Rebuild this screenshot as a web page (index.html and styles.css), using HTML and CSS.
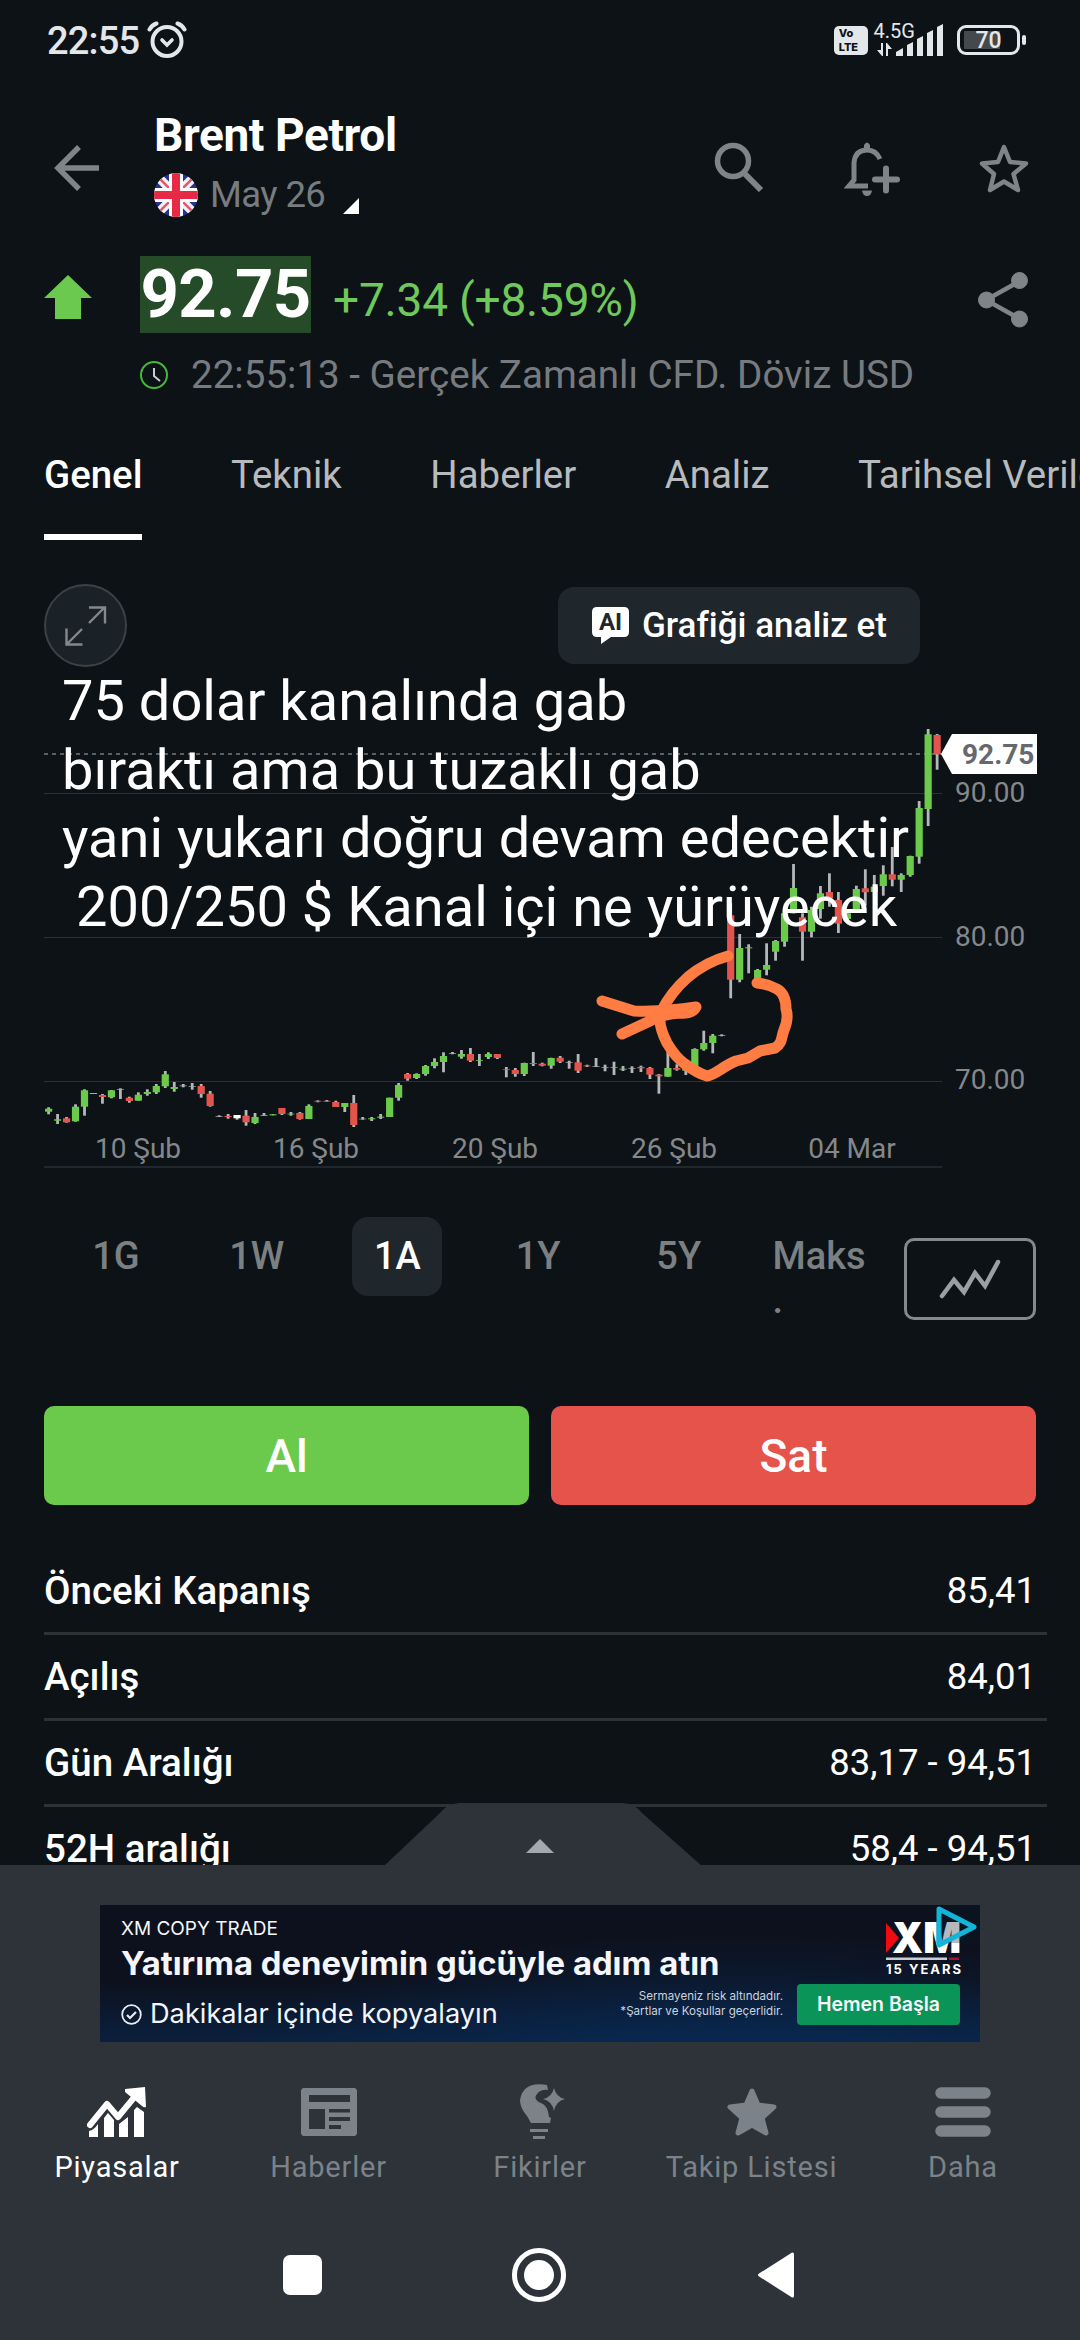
FILE: index.html
```html
<!DOCTYPE html>
<html lang="tr">
<head>
<meta charset="utf-8">
<title>Brent Petrol</title>
<link rel="stylesheet" href="styles.css">
</head>
<body>
<div class="screen">
  <header class="status">
    <span class="status-time">22:55</span>
    <svg class="alarm" width="40" height="38" viewBox="0 0 40 38" fill="none" stroke="#e4e7e9" stroke-linecap="round">
      <circle cx="20" cy="20.500" r="14.500" stroke-width="4"/><path d="M15 19l5 5 5-5" stroke-width="3.600"/><path d="M2.500 8.500Q5 4 9.500 2.500M37.500 8.500Q35 4 30.500 2.500" stroke-width="4"/>
    </svg>
    <span class="volte"><span>Vo</span><span>LTE</span></span>
    <div class="cell">
      <span class="cell-type">4.5G</span>
      <svg width="72" height="34" viewBox="0 0 72 34" fill="#e4e7e9">
        <path d="M9 21h-2v7H3l5 6h1zM12 34h2v-7h4l-5-6h-1zM22 34v-4l7-4v8zM33 34V23l6-3v14zM43 34V17l6-3v20zM53 34V11l6-3v26zM63 34V5l6-3v32z"/>
      </svg>
    </div>
    <div class="battery"><span>70</span></div>
    <i class="battery-nub"></i>
  </header>

  <section class="head">
    <svg class="back" width="46" height="46" viewBox="0 0 46 46" fill="none" stroke="#7f8488" stroke-width="5.500"><path d="M45 23H5M25 2L4 23l21 21"/></svg>
    <div class="title">
      <h1>Brent Petrol</h1>
      <div class="contract">
        <svg width="44" height="44" viewBox="0 0 44 44">
          <defs><clipPath id="disc"><circle cx="22" cy="22" r="22"/></clipPath></defs>
          <g clip-path="url(#disc)"><path fill="#24348f" d="M0 0h44v44H0z"/><path d="M0 0l44 44M44 0L0 44" stroke="#f4f2f7" stroke-width="9"/><path d="M0 0l44 44M44 0L0 44" stroke="#df5a6c" stroke-width="2.500"/><path d="M22 0v44M0 22h44" stroke="#fff" stroke-width="14"/><path d="M22 0v44M0 22h44" stroke="#e62a45" stroke-width="8"/></g>
        </svg>
        <span>May 26</span>
        <svg class="corner" width="16" height="16" viewBox="0 0 16 16"><path fill="#fff" d="M16 0v16H0z"/></svg>
      </div>
    </div>
    <svg class="i-search" width="50" height="50" viewBox="0 0 50 50" fill="none" stroke="#7f8488"><circle cx="19" cy="19" r="15.500" stroke-width="5.500"/><path d="M31 32L47 48" stroke-width="6"/></svg>
    <svg class="i-bell" width="56" height="56" viewBox="0 0 56 56" fill="none" stroke="#7f8488"><path d="M24 47H5l5-6V24q1-13 13-13 9 0 13 9" stroke-width="5" transform="translate(0 -2)"/><path d="M20 9V4q3-5 6 0v5z" fill="#7f8488" stroke="none"/><path d="M18 49.500h10q-1 5.500-5 5.500t-5-5.500z" fill="#7f8488" stroke="none"/><path d="M31 38.500h22M42 27.500v22" stroke-width="6" stroke-linecap="round"/></svg>
    <svg class="i-star" width="52" height="52" viewBox="0 0 52 52" fill="none" stroke="#7f8488" stroke-width="4.500" stroke-linejoin="round"><path d="M26 5l6 15 16 1.500-12.500 10.500 4.500 16-14-8.500L12 48l4-16L4 21.500 20 20z"/></svg>
  </section>

  <section class="quote">
    <svg class="up" width="48" height="44" viewBox="0 0 48 44"><path fill="#6bc94f" d="M24 0l24 23H37v21H11V23H0z"/></svg>
    <div class="quote-main">
      <div class="quote-line"><strong>92.75</strong><span>+7.34 (+8.59%)</span></div>
      <div class="quote-meta">
        <svg width="28" height="28" viewBox="0 0 28 28" fill="none"><circle cx="14" cy="14" r="13" stroke="#45b83c" stroke-width="2"/><path d="M14 7v8l6 5" stroke="#c9cdd0" stroke-width="2"/></svg>
        <span>22:55:13 - Gerçek Zamanlı CFD. Döviz USD</span>
      </div>
    </div>
    <svg class="share" width="50" height="56" viewBox="0 0 50 56" fill="#7f8488" stroke="#7f8488"><path d="M42 9L8 28l34 19" fill="none" stroke-width="4.500"/><circle cx="41.500" cy="8.500" r="8"/><circle cx="8.500" cy="28" r="8"/><circle cx="41.500" cy="47" r="8"/></svg>
  </section>

  <nav class="tabs"><a class="on">Genel</a><a>Teknik</a><a>Haberler</a><a>Analiz</a><a>Tarihsel Veriler</a></nav>

  <section class="chart-area">
    <div class="chart-tools">
      <span class="expand"><svg width="42" height="40" viewBox="0 0 42 40" fill="none" stroke="#84888b" stroke-width="2.400"><path d="M24 17L39 2M24 1.500h16v16M17 23L2 38M1.500 22.500v16h16"/></svg></span>
      <span class="analyse">
        <svg width="37" height="38" viewBox="0 0 37 38"><path fill="#fff" d="M5 0h27q5 0 5 5v20q0 5-5 5H19l-10 7v-7H5q-5 0-5-5V5q0-5 5-5z"/><text x="18.500" y="23" class="ai">AI</text></svg>
        <span>Grafiği analiz et</span>
      </span>
    </div>
    <svg class="chart" width="1080" height="500" viewBox="0 680 1080 500">
      <path d="M44 793.500H942M44 937.500H942M44 1081.500H942" stroke="#283238" stroke-width="1.200"/>
      <path d="M44 1167H942" stroke="#20282d" stroke-width="2"/>
      <path d="M44 754H942" stroke="#74797c" stroke-width="1.500" stroke-dasharray="4 4"/>
      <g id="candles"></g>
      <path d="M941 754l11-20h85v40h-85z" fill="#fff"/>
      <text x="962" y="763.500" class="last">92.75</text>
      <g class="axis"><text x="955" y="802">90.00</text><text x="955" y="946">80.00</text><text x="955" y="1089">70.00</text></g>
      <g class="axis mid"><text x="138" y="1158">10 Şub</text><text x="316" y="1158">16 Şub</text><text x="495" y="1158">20 Şub</text><text x="674" y="1158">26 Şub</text><text x="852" y="1158">04 Mar</text></g>
      <g fill="none" stroke="#ff7c43" stroke-width="11" stroke-linecap="round" stroke-linejoin="round">
        <path d="M728 956Q706 962 688 977C670 993 664 1006 661 1012Q657 1023 667 1043Q676 1058 685 1064Q697 1073 707 1076C717 1074 723 1066 736 1061L748 1058 760 1051 775 1048C783 1043 781 1037 784 1030Q789 1018 786 1009Q786 994 777 989Q768 984 757 983"/>
        <path d="M602 1001L634 1011Q665 1012 696 1007Q692 1014 681 1013Q662 1014 650 1021L622 1034"/>
      </g>
    </svg>
    <div class="note"><p>75 dolar kanalında gab</p><p>bıraktı ama bu tuzaklı gab</p><p>yani yukarı doğru devam edecektir</p><p class="lead">200/250 $ Kanal içi ne yürüyecek</p></div>
  </section>

  <section class="ranges">
    <div class="range-list"><span>1G</span><span>1W</span><span class="on">1A</span><span>1Y</span><span>5Y</span><span class="max">Maks<br>.</span></div>
    <span class="type"><svg width="62" height="40" viewBox="0 0 62 40" fill="none" stroke="#9b9fa1" stroke-width="4.500" stroke-linecap="round"><path d="M3 37L15 21 25 33 36 14 46 27 59 3"/></svg></span>
  </section>

  <section class="trade"><button class="buy">Al</button><button class="sell">Sat</button></section>

  <section class="stats">
    <div><b>Önceki Kapanış</b><span>85,41</span></div>
    <div><b>Açılış</b><span>84,01</span></div>
    <div><b>Gün Aralığı</b><span>83,17 - 94,51</span></div>
    <div><b>52H aralığı</b><span>58,4 - 94,51</span></div>
  </section>

  <footer class="bottom">
    <svg class="handle" width="318" height="63" viewBox="0 0 318 63"><path fill="#2d3339" d="M0 63L56 10Q64 0 76 0H238Q250 0 258 10L318 63z"/><path fill="#a5a9ae" d="M142 50l14-14 14 14z"/></svg>
    <div class="ad">
      <div class="ad-copy">
        <span class="ad-kicker">XM COPY TRADE</span>
        <span class="ad-title">Yatırıma deneyimin gücüyle adım atın</span>
        <span class="ad-sub"><svg width="21" height="21" viewBox="0 0 21 21" fill="none" stroke="#e8edf5" stroke-width="1.800"><circle cx="10.500" cy="10.500" r="9.300"/><path d="M6 11l3 3 6-6" stroke-width="2.200"/></svg>Dakikalar içinde kopyalayın</span>
      </div>
      <p class="ad-legal">Sermayeniz risk altındadır.<br>*Şartlar ve Koşullar geçerlidir.</p>
      <div class="ad-side">
        <svg class="xm" width="100" height="74" viewBox="0 0 100 74">
          <path fill="#f00b12" d="M6 18l13 15L6 48z"/>
          <text x="12" y="48" class="xm-word" textLength="69" lengthAdjust="spacingAndGlyphs">XM</text>
          <path fill="#c9ccd2" d="M6 52.500h61v2.500H6z"/><path fill="#a3122a" d="M69 52.500h10v2.500H69z"/>
          <text x="6" y="69" class="xm-years" textLength="75">15 YEARS</text>
          <path fill="#081827" fill-opacity=".3" d="M56 0h44v38H56z"/>
          <path fill="none" stroke="#12b4d8" stroke-width="5" stroke-linejoin="round" d="M59 4l35 18-35 18z"/>
        </svg>
        <span class="ad-cta">Hemen Başla</span>
      </div>
    </div>
    <nav class="menu">
      <a class="on"><svg width="60" height="52" viewBox="0 0 60 52"><path d="M3 39L20 18 31 31 50 8" fill="none" stroke="#fff" stroke-width="6" stroke-linecap="round" stroke-linejoin="round"/><path fill="#fff" d="M38 3l20-2 1 20q-2 1-4-1L38 6zM2 51v-6q5-1 9-7v13zM17 51V32l4-5 6 7v17zM32 51V38l9-7v20zM47 51V24l3-3 7 5v25z"/></svg>Piyasalar</a>
      <a><svg width="60" height="52" viewBox="0 0 60 52"><path fill="#7b8289" fill-rule="evenodd" d="M4 2h52l2 2v44l-2 2H4l-2-2V4zM10 9h41v7H10zM10 23h16v20H10zM30 23h21v3.500H30zM30 31h21v4H30zM30 39h12v4H30z"/></svg>Haberler</a>
      <a><svg width="60" height="56" viewBox="0 0 60 56" fill="#7b8289"><path d="M37 1q-24-4-27 15 0 8 7 16l4 7h19l1-5-2-1q-1-10-6-13-11-4-6-10 4-5 11-4zM44 4q2 9 11 11-9 2-11 12-2-10-11-12 9-2 11-11zM20 45h18v3H20zM23 52h12v3H23z"/></svg>Fikirler</a>
      <a><svg width="60" height="52" viewBox="0 0 60 52"><path fill="#7b8289" stroke="#7b8289" stroke-width="5" stroke-linejoin="round" d="M30 5l6 14 16 2-12 11 4 15-14-8-14 8 4-15L8 21l16-2z"/></svg>Takip Listesi</a>
      <a><svg width="60" height="52" viewBox="0 0 60 52"><path d="M8 7h44M8 26h44M8 45h44" stroke="#7b8289" stroke-width="11.500" stroke-linecap="round"/></svg>Daha</a>
    </nav>
    <div class="system">
      <i class="sys-square"></i>
      <svg width="56" height="56" viewBox="0 0 56 56"><circle cx="28" cy="28" r="24.500" fill="none" stroke="#fff" stroke-width="5"/><circle cx="28" cy="28" r="15" fill="#fff"/></svg>
      <svg width="38" height="48" viewBox="0 0 38 48"><path d="M2.500 24L35.500 3v42z" fill="#fff" stroke="#fff" stroke-width="3" stroke-linejoin="round"/></svg>
    </div>
  </footer>
</div>
<script src="chart.js"></script>
</body>
</html>
```
FILE: styles.css
```css
* { box-sizing: border-box; }
body { margin: 0; background: #0d1216; color: #fff; font-family: Roboto, "Noto Sans", sans-serif; }
.screen { position: relative; width: 1080px; height: 2340px; overflow: hidden; display: flex; flex-direction: column; }
svg { display: block; flex: none; }
h1, p { margin: 0; }

.status { height: 100px; flex: none; display: flex; align-items: flex-start; padding: 21px 54px 0 47px; color: #e4e7e9; }
.status-time { font-size: 38px; line-height: 40px; width: 100px; font-weight: 500; letter-spacing: -0.8px; }
.alarm { margin-right: 647px; }
.volte { width: 34px; height: 29px; margin-top: 5px; border-radius: 5px; background: #e4e7e9; color: #0d1216; display: flex; flex-direction: column; padding: 1px 0 0 5px; font: 800 11px/13.500px Inter, sans-serif; }
.cell { position: relative; margin-left: 6px; width: 84px; height: 34px; }
.cell-type { position: absolute; left: 0; top: 0; font-size: 20px; line-height: 20px; }
.cell svg { margin-top: 1px; }
.battery { width: 63px; height: 30px; margin-top: 4px; border: 3px solid #e4e7e9; border-radius: 9px; background: linear-gradient(#45494c, #45494c) 4px 3px / 36px 18px no-repeat; text-align: center; font-size: 23px; line-height: 25px; font-weight: 500; }
.battery-nub { width: 4px; height: 10px; margin: 14px 0 0 2px; border-radius: 2px; background: #e4e7e9; }

.head { height: 150px; flex: none; display: flex; align-items: flex-start; padding-left: 54px; }
.back { margin: 45px 54px 0 0; }
.title { width: 560px; }
h1 { font-size: 46px; line-height: 54px; font-weight: 700; margin-top: 8px; white-space: nowrap; letter-spacing: -0.4px; }
.contract { display: flex; align-items: center; margin-top: 11px; font-size: 36.500px; line-height: 44px; color: #777c80; }
.contract span { margin-left: 12px; letter-spacing: -0.6px; }
.contract .corner { margin: 21px 0 0 18px; }
.i-search { margin: 42px 80px 0 0; }
.i-bell { margin: 41px 78px 0 0; }
.i-star { margin-top: 42px; }

.quote { height: 170px; flex: none; display: flex; align-items: flex-start; padding: 6px 0 0 44px; }
.up { margin: 19px 48px 0 0; }
.quote-main { width: 838px; }
.quote-line { display: flex; align-items: flex-start; height: 88px; }
.quote-line strong { width: 171px; height: 77px; background: #264b29; font-size: 67px; letter-spacing: -0.6px; line-height: 77px; text-align: center; }
.quote-line span { margin-left: 22px; color: #6fc85a; font-size: 46px; letter-spacing: -0.2px; line-height: 88px; white-space: nowrap; }
.quote-meta { display: flex; align-items: center; gap: 23px; margin-top: 8px; font-size: 38.600px; line-height: 46px; height: 46px; color: #777b80; white-space: nowrap; }
.share { margin-top: 16px; }

.tabs { height: 120px; flex: none; display: flex; gap: 88.500px; padding: 31px 0 0 44px; font-size: 38.400px; line-height: 48px; color: #b7bbbe; white-space: nowrap; }
.tabs a { height: 89px; }
.tabs .on { color: #fff; font-weight: 500; border-bottom: 6px solid #fff; }

.chart-area { position: relative; height: 640px; flex: none; display: flex; flex-direction: column; padding-top: 44px; }
.chart-tools { display: flex; align-items: center; justify-content: space-between; padding: 0 160px 0 44px; height: 83px; }
.expand { width: 83px; height: 83px; border: 2px solid #3c4144; border-radius: 50%; background: #1b2227; display: grid; place-items: center; }
.analyse { width: 362px; height: 77px; border-radius: 16px; background: #20272c; display: flex; align-items: center; gap: 13px; padding-left: 34px; font-size: 35px; font-weight: 500; white-space: nowrap; }
.ai { font-size: 24px; font-weight: 700; fill: #20272c; text-anchor: middle; }
.chart { margin-top: 13px; }
.last { font-size: 28px; font-weight: 700; fill: #65686c; }
.axis { font-size: 28px; fill: #85888b; }
.mid { text-anchor: middle; }
.note { position: absolute; left: 62px; top: 127px; font-size: 56px; line-height: 68.500px; white-space: pre; }
.note .lead { padding-left: 14px; }

.ranges { height: 202px; flex: none; display: flex; align-items: flex-start; padding: 37px 0 0 71px; }
.range-list { display: grid; grid-template-columns: repeat(6, 90px); gap: 50.700px; width: 833px; height: 79px; font-size: 38px; line-height: 79px; text-align: center; color: #7b8083; font-weight: 500; }
.range-list .on { color: #fff; background: #20272c; border-radius: 16px; height: 79px; }
.range-list .max { line-height: 44px; padding-top: 17px; text-align: left; margin-left: -2px; }
.type { width: 132px; height: 82px; margin-top: 21px; border: 3px solid #85898c; border-radius: 10px; display: grid; place-items: center; }

.trade { height: 140px; flex: none; display: grid; grid-template-columns: 1fr 1fr; gap: 22px; padding: 24px 44px 17px; }
.trade button { border: 0; border-radius: 10px; color: #fff; font: 500 46px Roboto, sans-serif; }
.buy { background: #6bc94c; }
.sell { background: #e5534b; }

.stats { flex: none; height: 343px; overflow: hidden; padding: 27px 33px 0 44px; }
.stats div { height: 86px; border-bottom: 3px solid #2c3236; display: flex; justify-content: space-between; padding: 19px 11px 0 0; line-height: 46px; font-size: 36.500px; }
.stats b { font-size: 38.500px; font-weight: 500; }

.bottom { position: relative; flex: none; height: 475px; background: #2d3339; padding-top: 40px; }
.handle { position: absolute; left: 384px; top: -62px; }
.ad { width: 880px; height: 137px; margin: 0 100px; background: radial-gradient(ellipse at 72% 130%, #082a55 0%, rgba(8,42,85,0) 60%), linear-gradient(#0d111d 0 55%, #0a203e); display: flex; font-family: Inter, sans-serif; color: #f4f6fb; }
.ad-copy { width: 619px; flex: none; display: flex; flex-direction: column; padding: 12px 0 0 21px; white-space: nowrap; margin-right: -100px; }
.ad-kicker { font-size: 19px; line-height: 24px; }
.ad-title { font-size: 32.800px; line-height: 40px; font-weight: 700; margin-top: 2px; }
.ad-sub { display: flex; align-items: center; gap: 8px; font-size: 27.200px; line-height: 34px; margin-top: 14px; }
.ad-legal { width: 164px; margin-top: 84px; font-size: 11.600px; line-height: 15px; text-align: right; white-space: nowrap; color: #ccd2de; }
.ad-side { margin-left: 14px; width: 183px; }
.xm { margin-left: 83px; }
.xm-word { font: 900 42px Inter, sans-serif; fill: #fff; }
.xm-years { font: 700 13px Inter, sans-serif; fill: #fff; }
.ad-cta { display: block; width: 163px; height: 41px; margin-top: 5px; border-radius: 4px; background: #0b9457; text-align: center; font-size: 19.500px; font-weight: 600; line-height: 41px; }

.menu { display: grid; grid-template-columns: repeat(5, 211.500px); justify-content: center; padding-top: 42px; height: 160px; font-size: 29px; line-height: 36px; letter-spacing: .8px; color: #7b8289; }
.menu a { display: flex; flex-direction: column; align-items: center; white-space: nowrap; }
.menu a svg { height: 56px; margin-bottom: 9px; }
.menu .on { color: #fff; }
.system { display: flex; align-items: center; height: 56px; margin: 45px 0 0 283px; }
.sys-square { width: 39px; height: 40px; border-radius: 7px; background: #fff; margin-right: 189px; }
.system svg + svg { margin-left: 190px; }
```
FILE: chart.js
```javascript
// Each row: colour, wick top, wick bottom, body top, body bottom.
const candles = [
["g",1107.3,1114.3,1108.7,1111.7],["g",1114,1124,1119.3,1120.7],["r",1117,1122.7,1118.3,1122.3],["g",1104.3,1121.7,1106.7,1121.3],["g",1089.3,1115.7,1090.3,1106.7],
["w",1093,1094,1093,1094],["r",1094,1103.7,1095,1097],["g",1090,1098.3,1090.3,1097.3],["w",1088.3,1099,1089,1089.7],["r",1096.7,1102.7,1097.7,1101],
["g",1092.3,1100.7,1094.7,1100.7],["g",1089.3,1095.7,1092,1094],["g",1084,1094,1086,1092.3],["g",1071,1088,1074.3,1086.3],["g",1082,1091.7,1087,1089],
["w",1084,1087.3,1085.5,1086.2],["w",1083,1089.7,1086,1086.7],["r",1084,1097.7,1086,1094],["r",1091,1106.7,1093.7,1106],["w",1115.3,1117,1116,1116.7],
["r",1114,1118.7,1116,1117],["W",1115,1119.7,1115,1118.3],["r",1110,1125.7,1115.7,1122.3],["g",1113,1124,1117,1123],["g",1113,1116,1115,1115.8],
["g",1114.3,1115.3,1114.3,1115.3],["r",1108,1115,1108,1114],["g",1112,1115.7,1113.7,1114.4],["r",1112,1119.7,1113,1119],["g",1104.3,1119,1106,1119],
["r",1100.3,1102.3,1100.8,1101.6],["r",1100,1101.7,1100.8,1101.6],["r",1100.7,1107,1102,1107],["g",1103,1112,1103,1107],["r",1095,1127,1103,1125],
["w",1117,1119.7,1118.7,1119.3],["g",1117,1121,1118.3,1119.3],["g",1114,1119,1116.7,1117.7],["g",1097.7,1117,1097.7,1117],["g",1083,1100.7,1085,1097.7],
["r",1073,1080.7,1074,1078.7],["g",1073.3,1079,1074,1078],["g",1065,1075.7,1066,1074],["g",1058.3,1068.3,1062,1066],["g",1052.3,1072.3,1056,1062],
["w",1052,1054.3,1053,1053.7],["g",1050,1058.7,1054,1056.7],["r",1048,1062,1054,1060.7],["g",1054,1066,1060,1060.8],["g",1052.3,1059,1054,1057],
["r",1054,1059,1054,1058],["r",1067,1077.3,1069.3,1070],["r",1068,1076.7,1070,1074],["g",1062.7,1076,1063,1074],["r",1052,1066,1063,1064],
["r",1062.7,1066.3,1063.7,1065.7],["g",1057.7,1068.7,1058,1065.7],["r",1056,1063,1057.7,1061.7],["w",1060.7,1068.7,1062,1062.7],["r",1054,1073,1062.3,1070.7],
["r",1064.7,1067,1065.5,1066.3],["w",1058,1067,1066.3,1067],["w",1064.7,1071.3,1067.3,1068],["w",1061.7,1075,1067.3,1068],["g",1066,1071,1068.7,1069.7],
["w",1066.3,1073,1068,1068.7],["r",1065.7,1072,1067,1068.3],["r",1067,1079,1068,1074.7],["r",1074,1093.7,1074.7,1076.3],["g",1046.7,1076.7,1068,1076.7],
["r",1064.3,1070.7,1068,1069.7],["g",1063.3,1075,1065,1070.7],["g",1048.3,1066.7,1049,1066.7],["g",1030.7,1050.7,1043,1049.3],["g",1034,1053.3,1035.7,1043],
["w",1034.3,1036.3,1035.3,1036],["r",902.7,998.3,915.3,979.7],["g",934,982.3,948,979.7],["g",944.3,973.3,947.3,948.3],["g",969,981.7,970,980],
["g",943.3,975.3,965,969.7],["g",940,960.7,941,951.7],["g",911.7,946.7,913.3,941.7],["g",864,913.3,888,913.3],["r",913.3,960.7,917.3,931.7],
["g",906.7,937.3,910,931.7],["g",886,918.7,893.3,909],["r",873.3,906.7,892,898.3],["r",892,933,900,923.7],["g",910,920,913.3,919],
["g",885.7,910,889,909.3],["r",869.3,905.7,888.3,892.3],["g",875,896.7,886.7,892],["g",865.3,895.7,874.3,886],["r",847,886.3,874.3,879.7],
["g",873.3,892,875,879.7],["g",855.7,876.7,856,875],["g",801,863.7,808,856.7],["g",729,826,734.3,809],["r",734,769.7,735,754.3]
];
const colours = { g: "#6bc94c", r: "#e2544c", w: "#a9adb0", W: "#ffffff" };
const group = document.getElementById("candles");
const rect = (x, y, w, h, fill) => {
  const node = document.createElementNS("http://www.w3.org/2000/svg", "rect");
  Object.entries({ x, y, width: w, height: h, fill }).forEach(([k, v]) => node.setAttribute(k, v));
  group.appendChild(node);
};
candles.forEach(([kind, high, low, top, bottom], i) => {
  const x = 48.6 + 8.975 * i;
  rect(x - 1.4, high, 2.8, low - high, "#b4b7b9");
  rect(x - 3.6, top, 7.2, bottom - top, colours[kind]);
});
```
